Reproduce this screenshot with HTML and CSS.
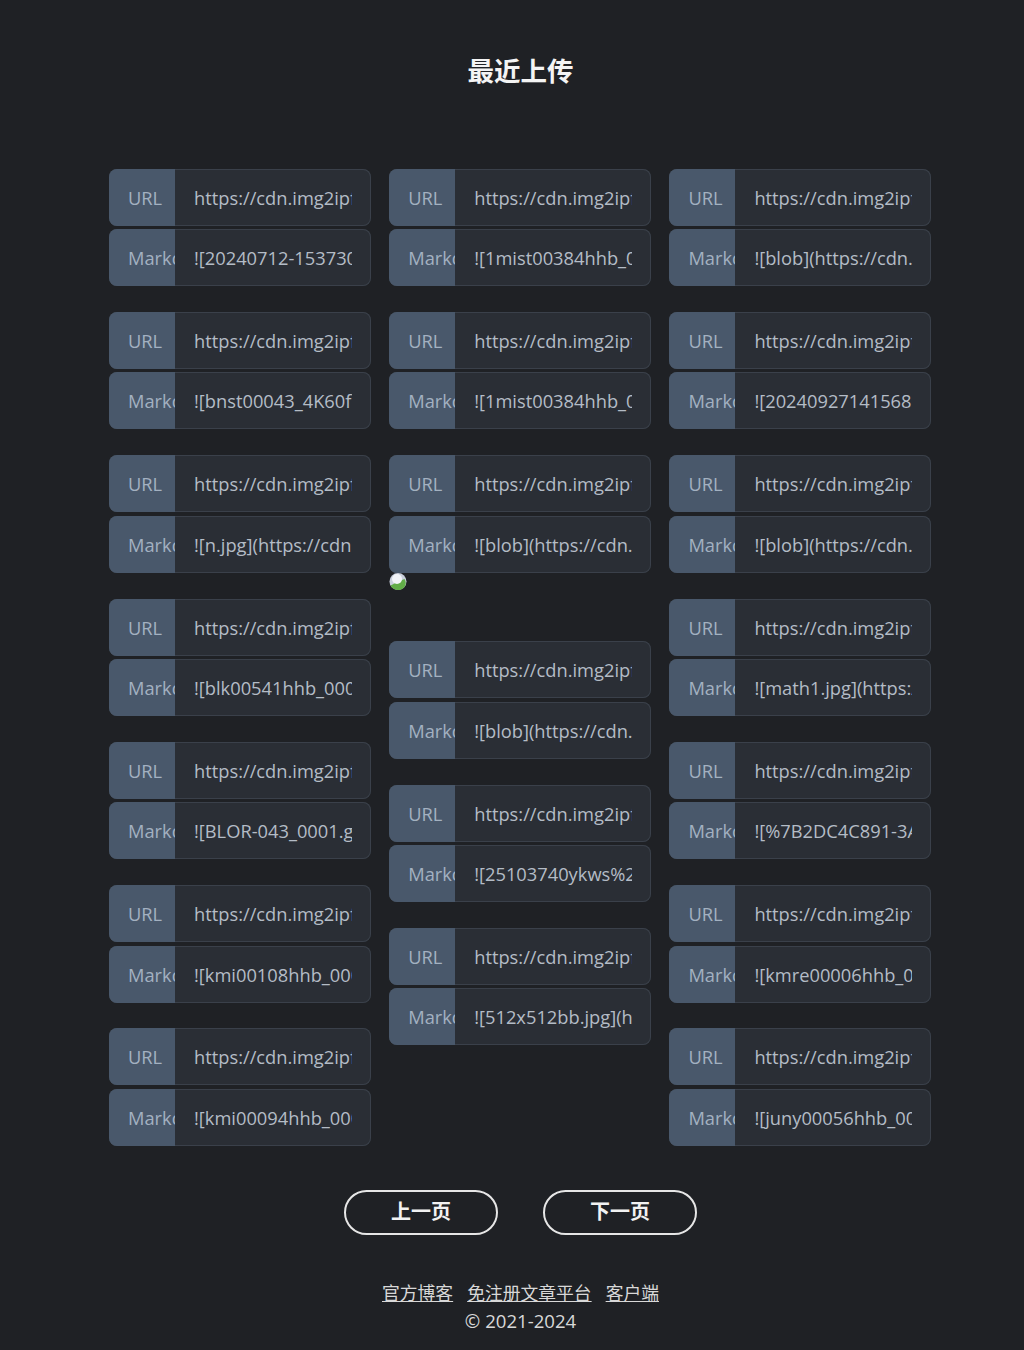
FILE: index.html
```html
<!DOCTYPE html>
<html lang="zh-CN">
<head>
  <meta charset="UTF-8">
  <meta name="viewport" content="width=device-width, initial-scale=1">
  <title>最近上传</title>
  <link rel="stylesheet" href="styles.css">
</head>
<body>
  <main class="page">
    <h2 class="title">最近上传</h2>

    <div class="uploads">
      <div class="col">
        <div class="item">
          <div class="group"><span class="label">URL</span><div class="field"><span class="value">https://cdn.img2ipfs.com/ipfs/Qm</span></div></div>
          <div class="group"><span class="label">Markdown</span><div class="field"><span class="value">![20240712-153730.jpg](https://cdn</span></div></div>
        </div>
        <div class="item">
          <div class="group"><span class="label">URL</span><div class="field"><span class="value">https://cdn.img2ipfs.com/ipfs/Qm</span></div></div>
          <div class="group"><span class="label">Markdown</span><div class="field"><span class="value">![bnst00043_4K60fps.jpg](https://cdn</span></div></div>
        </div>
        <div class="item">
          <div class="group"><span class="label">URL</span><div class="field"><span class="value">https://cdn.img2ipfs.com/ipfs/Qm</span></div></div>
          <div class="group"><span class="label">Markdown</span><div class="field"><span class="value">![n.jpg](https://cdn.img2ipfs.com</span></div></div>
        </div>
        <div class="item">
          <div class="group"><span class="label">URL</span><div class="field"><span class="value">https://cdn.img2ipfs.com/ipfs/Qm</span></div></div>
          <div class="group"><span class="label">Markdown</span><div class="field"><span class="value">![blk00541hhb_0001.jpg](https://cdn</span></div></div>
        </div>
        <div class="item">
          <div class="group"><span class="label">URL</span><div class="field"><span class="value">https://cdn.img2ipfs.com/ipfs/Qm</span></div></div>
          <div class="group"><span class="label">Markdown</span><div class="field"><span class="value">![BLOR-043_0001.gif](https://cdn</span></div></div>
        </div>
        <div class="item">
          <div class="group"><span class="label">URL</span><div class="field"><span class="value">https://cdn.img2ipfs.com/ipfs/Qm</span></div></div>
          <div class="group"><span class="label">Markdown</span><div class="field"><span class="value">![kmi00108hhb_0001.jpg](https://cdn</span></div></div>
        </div>
        <div class="item">
          <div class="group"><span class="label">URL</span><div class="field"><span class="value">https://cdn.img2ipfs.com/ipfs/Qm</span></div></div>
          <div class="group"><span class="label">Markdown</span><div class="field"><span class="value">![kmi00094hhb_0001.jpg](https://cdn</span></div></div>
        </div>
      </div>

      <div class="col">
        <div class="item">
          <div class="group"><span class="label">URL</span><div class="field"><span class="value">https://cdn.img2ipfs.com/ipfs/Qm</span></div></div>
          <div class="group"><span class="label">Markdown</span><div class="field"><span class="value">![1mist00384hhb_0001.jpg](https://cdn</span></div></div>
        </div>
        <div class="item">
          <div class="group"><span class="label">URL</span><div class="field"><span class="value">https://cdn.img2ipfs.com/ipfs/Qm</span></div></div>
          <div class="group"><span class="label">Markdown</span><div class="field"><span class="value">![1mist00384hhb_0002.jpg](https://cdn</span></div></div>
        </div>
        <div class="item item-broken">
          <div class="group"><span class="label">URL</span><div class="field"><span class="value">https://cdn.img2ipfs.com/ipfs/Qm</span></div></div>
          <div class="group"><span class="label">Markdown</span><div class="field"><span class="value">![blob](https://cdn.img2ipfs.com</span></div></div>
          <svg class="broken-img" width="18" height="19" viewBox="0 0 18 19" role="img" aria-label="图片">
            <circle cx="9" cy="9.5" r="8.5" fill="#c9cfdc"/>
            <path d="M1.5 13.5 Q9 9.5 15.5 7 Q18 11 15.5 15 A8.5 8.5 0 0 1 1.5 13.5Z" fill="#62ad48"/>
            <circle cx="8" cy="7" r="5" fill="#f2f4f8"/>
          </svg>
        </div>
        <div class="item">
          <div class="group"><span class="label">URL</span><div class="field"><span class="value">https://cdn.img2ipfs.com/ipfs/Qm</span></div></div>
          <div class="group"><span class="label">Markdown</span><div class="field"><span class="value">![blob](https://cdn.img2ipfs.com</span></div></div>
        </div>
        <div class="item">
          <div class="group"><span class="label">URL</span><div class="field"><span class="value">https://cdn.img2ipfs.com/ipfs/Qm</span></div></div>
          <div class="group"><span class="label">Markdown</span><div class="field"><span class="value">![25103740ykws%20.jpg](https://cdn</span></div></div>
        </div>
        <div class="item">
          <div class="group"><span class="label">URL</span><div class="field"><span class="value">https://cdn.img2ipfs.com/ipfs/Qm</span></div></div>
          <div class="group"><span class="label">Markdown</span><div class="field"><span class="value">![512x512bb.jpg](https://cdn</span></div></div>
        </div>
      </div>

      <div class="col">
        <div class="item">
          <div class="group"><span class="label">URL</span><div class="field"><span class="value">https://cdn.img2ipfs.com/ipfs/Qm</span></div></div>
          <div class="group"><span class="label">Markdown</span><div class="field"><span class="value">![blob](https://cdn.img2ipfs.com</span></div></div>
        </div>
        <div class="item">
          <div class="group"><span class="label">URL</span><div class="field"><span class="value">https://cdn.img2ipfs.com/ipfs/Qm</span></div></div>
          <div class="group"><span class="label">Markdown</span><div class="field"><span class="value">![20240927141568.jpg](https://cdn</span></div></div>
        </div>
        <div class="item">
          <div class="group"><span class="label">URL</span><div class="field"><span class="value">https://cdn.img2ipfs.com/ipfs/Qm</span></div></div>
          <div class="group"><span class="label">Markdown</span><div class="field"><span class="value">![blob](https://cdn.img2ipfs.com</span></div></div>
        </div>
        <div class="item">
          <div class="group"><span class="label">URL</span><div class="field"><span class="value">https://cdn.img2ipfs.com/ipfs/Qm</span></div></div>
          <div class="group"><span class="label">Markdown</span><div class="field"><span class="value">![math1.jpg](https://cdn.img2ipfs</span></div></div>
        </div>
        <div class="item">
          <div class="group"><span class="label">URL</span><div class="field"><span class="value">https://cdn.img2ipfs.com/ipfs/Qm</span></div></div>
          <div class="group"><span class="label">Markdown</span><div class="field"><span class="value">![%7B2DC4C891-3A.jpg](https://cdn</span></div></div>
        </div>
        <div class="item">
          <div class="group"><span class="label">URL</span><div class="field"><span class="value">https://cdn.img2ipfs.com/ipfs/Qm</span></div></div>
          <div class="group"><span class="label">Markdown</span><div class="field"><span class="value">![kmre00006hhb_0001.jpg](https://cdn</span></div></div>
        </div>
        <div class="item">
          <div class="group"><span class="label">URL</span><div class="field"><span class="value">https://cdn.img2ipfs.com/ipfs/Qm</span></div></div>
          <div class="group"><span class="label">Markdown</span><div class="field"><span class="value">![juny00056hhb_0001.jpg](https://cdn</span></div></div>
        </div>
      </div>
    </div>

    <div class="pager">
      <a href="#" class="btn">上一页</a>
      <a href="#" class="btn">下一页</a>
    </div>

    <footer class="foot">
      <div class="foot-links">
        <a href="#">官方博客</a>
        <a href="#">免注册文章平台</a>
        <a href="#">客户端</a>
      </div>
      <div class="copy">© 2021-2024</div>
    </footer>
  </main>
</body>
</html>
```

FILE: styles.css
```css
html, body {
  margin: 0;
  padding: 0;
}
body {
  background: #1f2125;
  color: #fff;
  font-family: "Open Sans", "Noto Sans CJK SC", sans-serif;
  height: 1350px;
  overflow: hidden;
}
.page {
  width: 823px;
  margin-left: 109px;
  padding-top: 53px;
}
.title {
  margin: 0;
  text-align: center;
  font-size: 26.5px;
  line-height: 36px;
  font-weight: 700;
  color: #f4f4f4;
}
.uploads {
  display: grid;
  grid-template-columns: 262px 262px 262px;
  column-gap: 18.2px;
  margin-top: 79.7px;
}
.item {
  margin-bottom: 25.8px;
}
.item-broken {
  margin-bottom: 0;
  height: 186px;
}
.group {
  display: flex;
  height: 57px;
  margin-bottom: 3.5px;
  border-radius: 8px;
  overflow: hidden;
  background: #2a2e35;
  box-shadow: inset 0 0 0 1px #3a404a;
  font-size: 18.3px;
}
.group:last-of-type {
  margin-bottom: 0;
}
.label {
  flex: 0 0 66px;
  box-sizing: border-box;
  padding-left: 19px;
  line-height: 57px;
  background: #49586b;
  color: #a3b1c1;
  white-space: nowrap;
  overflow: hidden;
}
.field {
  flex: 1;
  min-width: 0;
  padding: 0 19px;
}
.value {
  display: block;
  line-height: 57px;
  color: #b4bcc6;
  white-space: nowrap;
  overflow: hidden;
}
.broken-img {
  display: block;
  margin-top: -1px;
}
.pager {
  display: flex;
  justify-content: center;
  gap: 45px;
  margin-top: 18.5px;
}
.btn {
  box-sizing: border-box;
  width: 154px;
  height: 45px;
  line-height: 40px;
  border: 2px solid #e6e6e6;
  border-radius: 23px;
  text-align: center;
  text-decoration: none;
  color: #f2f2f2;
  font-size: 20px;
  font-weight: 700;
}
.foot {
  margin-top: 45px;
  text-align: center;
  font-size: 17.8px;
  line-height: 27px;
  color: #d8d8d8;
}
.foot-links {
  display: flex;
  justify-content: center;
  gap: 14px;
}
.foot-links a {
  color: #d8d8d8;
}
.copy {
  font-size: 18.6px;
}
```
